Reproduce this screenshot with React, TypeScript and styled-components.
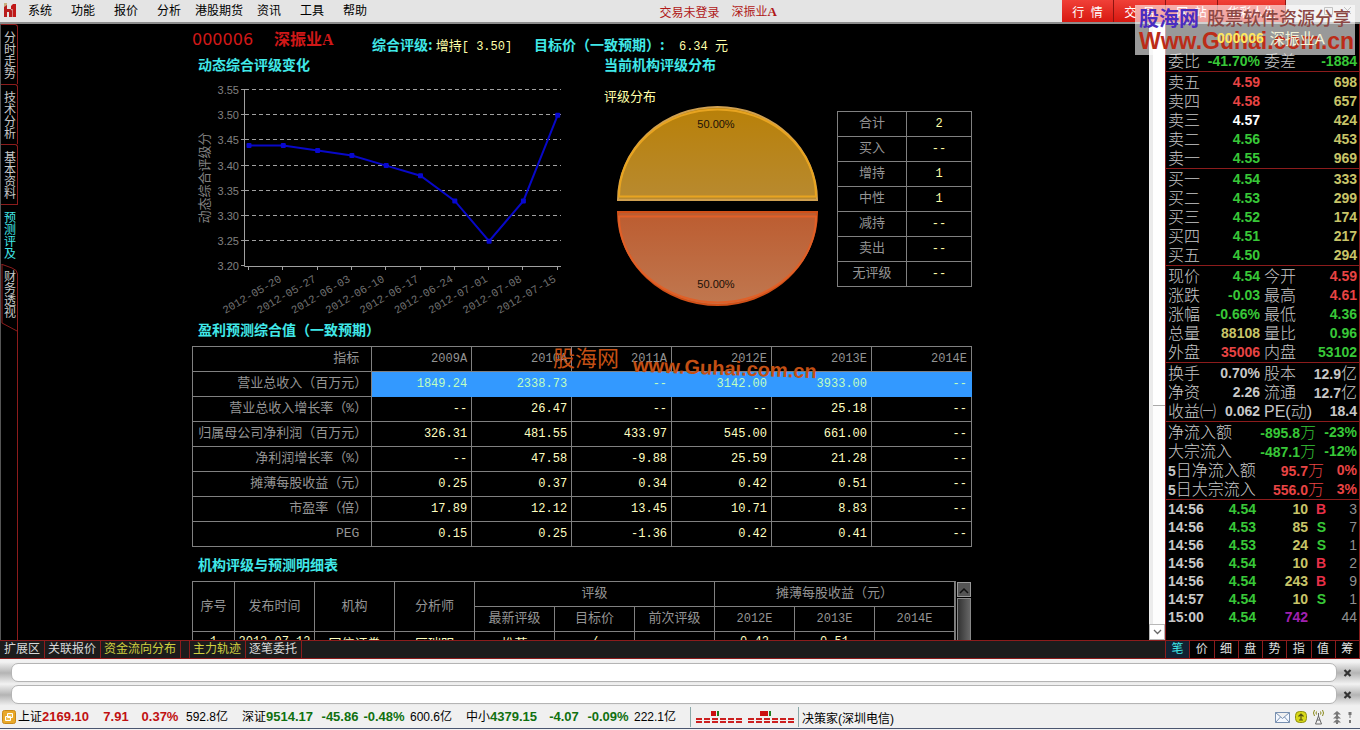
import React from "react";
import styled, { createGlobalStyle, css } from "styled-components";

const RED_LINE = "#8c1c1c";
const GREEN = "#38c838";
const RED = "#e84444";
const YELLOW = "#c8c468";
const SILVER = "#c8c8c8";
const CYAN = "#40e8e8";

const Global = createGlobalStyle`
  *, *::before, *::after { box-sizing: border-box; }
  html, body, #root { height: 100%; }
  body { margin: 0; background: #000; font-family: "Liberation Sans", "Noto Sans CJK SC", sans-serif; font-size: 12px; }
  button, input { font: inherit; color: inherit; margin: 0; padding: 0; border: 0; background: none; }
  h1, h2, p, ul { margin: 0; padding: 0; font-weight: normal; }
`;

const Page = styled.div`
  position: relative;
  display: flex;
  flex-direction: column;
  height: 100vh;
  overflow: hidden;
`;

/* ---------- menu bar ---------- */
const MenuBar = styled.header`
  display: flex;
  flex: none;
  height: 24px;
  background: #e4e4e4;
  border-bottom: 2px solid #8c8c8c;
  color: #000;
`;
const MenuSide = styled.nav`
  display: flex;
  flex: 1;
  align-items: center;
  gap: 19px;
  padding-left: 3px;
  > svg { margin-right: -7px; }
`;
const MenuItem = styled.button<{ $tight?: boolean }>`
  line-height: 22px;
  white-space: nowrap;
  margin-right: ${(p) => (p.$tight ? "-5px" : "0")};
`;
const LoginState = styled.div`
  display: flex;
  flex: 1;
  align-items: center;
  justify-content: flex-end;
  gap: 12px;
  padding-right: 285px;
  color: #b01818;
  white-space: nowrap;
  b { font-family: "Liberation Serif", serif; font-size: 13px; }
`;
const MenuActions = styled.div`
  display: flex;
  flex: none;
  width: 298px;
`;
const RedButton = styled.button<{ $wide?: boolean }>`
  width: ${(p) => (p.$wide ? 68 : 52)}px;
  height: 22px;
  border-right: 1px solid #8c1410;
  background: linear-gradient(#f04038, #d81810);
  color: #fff;
  white-space: pre;
`;
const WindowButtons = styled.div`
  display: flex;
  flex: 1;
  align-items: center;
  justify-content: flex-end;
  gap: 10px;
  padding-right: 8px;
`;

/* ---------- frame ---------- */
const Body = styled.div`
  display: flex;
  flex: 1;
  min-height: 0;
`;
const Left = styled.div`
  display: flex;
  flex: 1;
  flex-direction: column;
  min-width: 0;
`;
const Work = styled.main`
  display: flex;
  flex: 1;
  min-height: 0;
`;
const SideTabs = styled.nav`
  display: flex;
  flex: none;
  flex-direction: column;
  width: 18px;
  border-left: 1px solid #555;
`;
const SideTab = styled.button<{ $state?: "active" | "last" }>`
  position: relative;
  height: 60px;
  padding: 2px 2px 0 3px;
  line-height: 12px;
  text-align: center;
  color: ${(p) => (p.$state === "active" ? CYAN : SILVER)};
  ${(p) => !p.$state && css`border: 1px solid ${RED_LINE}; border-width: 1px 1px 0 0; border-top-right-radius: 3px;`}
  ${(p) => p.$state === "active" && css`border-top: 1px solid ${RED_LINE};`}
  span { display: block; width: 12px; }
  svg { position: absolute; left: 0; top: 0; }
`;
const SideRest = styled.div`
  flex: 1;
  margin-top: 6px;
  border-right: 1px solid ${RED_LINE};
`;
const Content = styled.section`
  flex: 1;
  min-width: 0;
  overflow: hidden;
  padding: 4px 3px 0 0;
`;
const Sheet = styled.div`
  width: 100%;
  max-width: 780px;
  margin: 0 auto;
`;
const PageScroll = styled.div`
  display: flex;
  flex: none;
  flex-direction: column;
  justify-content: space-between;
  width: 16px;
  background: #fdfdfd;
  border-left: 4px solid #ececec;
`;
const ScrollThumb = styled.div`
  height: 382px;
  border-bottom: 1px solid #aaa;
  background: #fff;
`;
const ScrollButton = styled.button`
  width: 16px;
  height: 16px;
  margin-left: -4px;
  border: 1px solid #b8b8b8;
  background: #fff;
  line-height: 0;
`;

/* ---------- report ---------- */
const ReportHead = styled.div`
  display: flex;
  height: 28px;
  line-height: 24px;
  white-space: pre;
`;
const Stock = styled.h1`
  width: 180px;
  font-size: 16px;
  color: #d01818;
  font-family: "DejaVu Sans", "Noto Sans CJK SC", sans-serif;
  b { font-family: "Liberation Serif", "Noto Sans CJK SC", serif; margin-left: 21px; }
`;
const Metric = styled.p<{ $wide?: boolean }>`
  width: ${(p) => (p.$wide ? 220 : 162)}px;
  padding-top: 4px;
  color: #ffffa8;
  font: 13px/24px "Noto Sans CJK SC", sans-serif;
  b { color: ${CYAN}; font-size: 14px; }
  span { font-family: "Liberation Mono", monospace; font-size: 12px; }
`;
const Heading = styled.h2`
  padding-left: 6px;
  height: 18px;
  font-size: 14px;
  line-height: 18px;
  font-weight: bold;
  color: ${CYAN};
  white-space: nowrap;
`;
const Charts = styled.div`
  display: grid;
  grid-template-columns: 406px 1fr;
  height: 265px;
  svg { display: block; }
`;
const LineBox = styled.div`
  padding-top: 6px;
`;
const Ratings = styled.div`
  display: flex;
  align-items: flex-start;
  justify-content: space-between;
`;
const PieTitle = styled.p`
  padding: 13px 0 0 6px;
  height: 31px;
  font-size: 13px;
  line-height: 20px;
  color: #ffffa8;
`;
const PieBox = styled.div`
  padding-left: 14px;
`;
const grid = css`
  border-collapse: collapse;
  table-layout: fixed;
  color: #949494;
  font: 12px/20px "Liberation Mono", "Noto Sans CJK SC", monospace;
  th, td { height: 25px; padding: 0 4px; border: 1px solid #808080; font-weight: normal; white-space: nowrap; overflow: hidden; }
`;
const RatingTable = styled.table`
  ${grid}
  width: 135px;
  margin: 37px 0 0;
  text-align: center;
  font-size: 13px;
  td { width: 65px; color: #ffffa8; font-size: 12px; }
`;
const ForecastTable = styled.table`
  ${grid}
  width: 100%;
  margin: 7px 0 9px;
  text-align: right;
  tbody th, thead th:first-child { font-size: 13px; }
  td { color: #ffffc0; }
`;
const ForecastRow = styled.tr<{ $on: boolean }>`
  ${(p) => p.$on && css`td { background: #3399ff; border-color: #3399ff; color: #c0ffc0; }`}
`;
const DetailWrap = styled.div`
  display: grid;
  grid-template-columns: 1fr 17px;
  margin-top: 7px;
`;
const DetailTable = styled.table`
  ${grid}
  width: 100%;
  text-align: center;
  th { font-size: 13px; }
  td { color: #ffffc0; font-size: 13px; }
  th.narrow, td.narrow { font-size: 12px; }
  td.narrow { line-height: 16px; padding: 0 2px 5px; }
  col:first-child { width: 42px; }
`;
const DetailScroll = styled.div`
  padding: 1px 1px 0 1px;
  border-left: 1px solid #777;
`;
const DetailUp = styled.button`
  display: block;
  width: 14px;
  height: 15px;
  border: 1px solid #999;
  background: #555;
  line-height: 0;
`;
const DetailThumb = styled.div`
  width: 14px;
  height: 60px;
  margin-top: 1px;
  border: 1px solid #888;
  background: linear-gradient(90deg, #333, #666);
`;

/* ---------- bottom tab bar ---------- */
const BottomTabs = styled.nav`
  display: flex;
  flex: none;
  height: 19px;
  padding-left: 1px;
  background: #1c1c1c;
  border: 1px solid ${RED_LINE};
  border-width: 1px 0;
`;
const BottomTab = styled.button<{ $hot?: boolean; $gap?: boolean }>`
  padding: 0 4px 0 3px;
  border-right: 1px solid ${RED_LINE};
  line-height: 17px;
  color: ${(p) => (p.$hot ? "#d0d040" : "#d8d8d8")};
  white-space: nowrap;
  ${(p) => p.$gap && css`margin-left: 8px; border-left: 1px solid ${RED_LINE};`}
`;

/* ---------- quote panel ---------- */
const Quote = styled.aside`
  display: flex;
  flex: none;
  flex-direction: column;
  width: 195px;
  background: #000;
  border: 1px solid ${RED_LINE};
  border-width: 0 1px 0 1px;
  color: ${SILVER};
  font-size: 14px;
`;
const QuoteTitle = styled.div`
  position: relative;
  z-index: 3;
  display: flex;
  flex: none;
  align-items: center;
  gap: 6px;
  height: 27px;
  padding-left: 51px;
  font-size: 15px;
  color: #f4f4d8;
  b { color: #ffe860; font-size: 14px; }
`;
const QuoteGroup = styled.div`
  flex: none;
  padding: 1px 2px 0;
  border-bottom: 1px solid ${RED_LINE};
`;
const QuoteRow = styled.div`
  display: flex;
  gap: 4px;
  height: 19px;
`;
const Half = styled.div<{ $w?: number }>`
  display: flex;
  justify-content: space-between;
  ${(p) => (p.$w ? css`width: ${p.$w}px;` : css`flex: 1;`)}
`;
const Name = styled.span`
  font-size: 16px;
  line-height: 19px;
  font-weight: 300;
  white-space: nowrap;
  b { font-size: 14px; font-weight: 700; }
`;
const Num = styled.b<{ $c?: string }>`
  color: ${(p) => p.$c || SILVER};
  line-height: 19px;
  white-space: nowrap;
  i { font-style: normal; font-weight: 300; font-size: 16px; }
`;
const Ticks = styled.div`
  flex: 1;
  min-height: 0;
  overflow: hidden;
  padding: 0 2px;
`;
const Tick = styled.div`
  display: grid;
  grid-template-columns: 40px 48px 52px 18px 1fr;
  line-height: 18px;
  text-align: right;
  > :first-child { text-align: left; }
`;
const TickCell = styled.b<{ $c: string; $plain?: boolean }>`
  color: ${(p) => p.$c};
  font-weight: ${(p) => (p.$plain ? "normal" : "bold")};
`;
const QuoteTabs = styled.nav`
  display: flex;
  flex: none;
  height: 19px;
  border: 1px solid ${RED_LINE};
  border-width: 1px 0;
`;
const QuoteTab = styled.button<{ $on?: boolean }>`
  flex: 1;
  font-size: 12px;
  line-height: 17px;
  border-right: 1px solid ${RED_LINE};
  color: ${(p) => (p.$on ? CYAN : "#e0e0e0")};
  background: ${(p) => (p.$on ? "#112233" : "#000")};
  &:last-child { border-right: 0; }
`;

/* ---------- footer ---------- */
const Bars = styled.div`
  flex: none;
  background: #f2f2f2;
  padding-top: 3px;
`;
const Bar = styled.label`
  display: flex;
  height: 22px;
  padding: 1px 0 2px 11px;
  background: linear-gradient(#f2f2f2, #b4b4b4 50%, #f2f2f2);
  input { flex: 1; min-width: 0; border: 1px solid #b4b4b4; border-radius: 7px; background: #fff; padding: 0 8px; color: #000; }
  button { width: 23px; padding: 0 2px 0 0; line-height: 0; }
`;
const Status = styled.footer`
  display: flex;
  flex: none;
  align-items: center;
  height: 23px;
  padding-left: 2px;
  background: #f0f0f0;
  border-bottom: 1px solid #4a5670;
  color: #000;
`;
const Index = styled.div`
  display: grid;
  grid-template-columns: 78px 40px 48px 46px;
  width: 224px;
  text-align: center;
  white-space: nowrap;
  line-height: 22px;
  > :first-child { text-align: left; }
`;
const Figure = styled.b<{ $up?: boolean }>`
  font-size: 13px;
  color: ${(p) => (p.$up ? "#c01010" : "#107010")};
`;
const Network = styled.div`
  width: 109px;
  height: 20px;
  border: 1px solid #8aa8a8;
  border-width: 0 1px;
  padding-left: 3px;
  svg { display: block; }
`;
const Server = styled.span`
  flex: 1;
  padding-left: 3px;
`;
const Tray = styled.div`
  display: flex;
  align-items: center;
  padding-right: 7px;
  svg { display: block; }
`;
const Desktop = styled.div`
  flex: none;
  height: 1px;
  background: #f4f4f4;
`;

/* ---------- overlays ---------- */
const SiteMark = styled.div`
  position: absolute;
  z-index: 2;
  top: 5px;
  right: 5px;
  width: 220px;
  height: 50px;
  padding: 3px 4px;
  background: rgba(255, 255, 255, 0.6);
  white-space: nowrap;
  pointer-events: none;
`;
const MarkTop = styled.div`
  display: flex;
  gap: 8px;
  line-height: 22px;
  font-size: 18px;
  font-weight: 500;
  color: #8c4844;
  b { font-size: 20px; color: #4a2cc0; }
`;
const MarkUrl = styled.div`
  font-size: 23px;
  line-height: 22px;
  font-weight: bold;
  color: #bc2c18;
`;
const MarkHost = styled.div`
  position: relative;
`;
const CenterMark = styled.div`
  position: absolute;
  top: 1px;
  left: 361px;
  display: flex;
  gap: 14px;
  color: #c45014;
  font-size: 22px;
  line-height: 24px;
  white-space: nowrap;
  pointer-events: none;
  b { font-size: 20px; transform: rotate(2deg); margin-top: 9px; }
`;

const menu = ["系统", "功能", "报价", "分析", "港股期货", "资讯", "工具", "帮助"];
const sideTabs = ["分时走势", "技术分析", "基本资料", "预测评及", "财务透视"];

const values = [3.44, 3.44, 3.43, 3.42, 3.4, 3.38, 3.33, 3.25, 3.33, 3.5];
const dates = ["2012-05-20", "2012-05-27", "2012-06-03", "2012-06-10", "2012-06-17", "2012-06-24", "2012-07-01", "2012-07-08", "2012-07-15"];
const levels = ["3.55", "3.50", "3.45", "3.40", "3.35", "3.30", "3.25", "3.20"];

const ratings = [["合计", "2"], ["买入", "--"], ["增持", "1"], ["中性", "1"], ["减持", "--"], ["卖出", "--"], ["无评级", "--"]];

const forecast = [
  ["营业总收入（百万元）", "1849.24", "2338.73", "--", "3142.00", "3933.00", "--"],
  ["营业总收入增长率（%）", "--", "26.47", "--", "--", "25.18", "--"],
  ["归属母公司净利润（百万元）", "326.31", "481.55", "433.97", "545.00", "661.00", "--"],
  ["净利润增长率（%）", "--", "47.58", "-9.88", "25.59", "21.28", "--"],
  ["摊薄每股收益（元）", "0.25", "0.37", "0.34", "0.42", "0.51", "--"],
  ["市盈率（倍）", "17.89", "12.12", "13.45", "10.71", "8.83", "--"],
  ["PEG\u00a0", "0.15", "0.25", "-1.36", "0.42", "0.41", "--"],
];

const sells = [["卖五", "4.59", "698", RED], ["卖四", "4.58", "657", RED], ["卖三", "4.57", "424", "#fff"], ["卖二", "4.56", "453", GREEN], ["卖一", "4.55", "969", GREEN]];
const buys = [["买一", "4.54", "333", GREEN], ["买二", "4.53", "299", GREEN], ["买三", "4.52", "174", GREEN], ["买四", "4.51", "217", GREEN], ["买五", "4.50", "294", GREEN]];
const prices = [
  ["现价", "4.54", GREEN, "今开", "4.59", RED],
  ["涨跌", "-0.03", GREEN, "最高", "4.61", RED],
  ["涨幅", "-0.66%", GREEN, "最低", "4.36", GREEN],
  ["总量", "88108", YELLOW, "量比", "0.96", GREEN],
  ["外盘", "35006", RED, "内盘", "53102", GREEN],
];
const basics = [
  ["换手", "0.70%", SILVER, "股本", "12.9亿", SILVER],
  ["净资", "2.26", SILVER, "流通", "12.7亿", SILVER],
  ["收益㈠", "0.062", SILVER, "PE(动)", "18.4", SILVER],
];
const flows = [
  ["净流入额", "-895.8", "-23%", GREEN, 148],
  ["大宗流入", "-487.1", "-12%", GREEN, 148],
  ["5日净流入额", "95.7", "0%", RED, 156],
  ["5日大宗流入", "556.0", "3%", RED, 156],
] as const;
const ticks = [
  ["14:56", "4.54", "10", "B", "3"],
  ["14:56", "4.53", "85", "S", "7"],
  ["14:56", "4.53", "24", "S", "1"],
  ["14:56", "4.54", "10", "B", "2"],
  ["14:56", "4.54", "243", "B", "9"],
  ["14:57", "4.54", "10", "S", "1"],
  ["15:00", "4.54", "742", "", "44"],
];
const indices = [
  ["上证", "2169.10", "7.91", "0.37%", "592.8亿"],
  ["深证", "9514.17", "-45.86", "-0.48%", "600.6亿"],
  ["中小", "4379.15", "-4.07", "-0.09%", "222.1亿"],
];

function Logo() {
  return (
    <svg width="13" height="16" viewBox="0 0 13 16" aria-hidden="true">
      <path d="M1 0h3v3H2v2H1z" fill="#c8b080" />
      <path d="M1 4l3-2v4h3q2 0 2 2v6H6V9H4v5H1z" fill="#b81c1c" />
      <path d="M8 3l2-2h3v13H9.500V6H8z" fill="#c01818" />
    </svg>
  );
}

function LineChart() {
  const x = (i: number) => 57 + i * 34.3;
  const y = (v: number) => 10 + (3.55 - v) * 504;
  return (
    <svg width="380" height="240" viewBox="0 0 380 240" aria-label="动态综合评级分">
      {levels.map((l, i) => (
        <g key={l}>
          <text x="47" y={14 + i * 25.2} textAnchor="end" fill="#808080" fontFamily="Liberation Sans" fontSize="11">{l}</text>
          <path d={`M49 ${Math.round(i * 25.2) + 9.5}h4`} stroke="#999" />
          {i < 7 && <path d={`M53 ${Math.round(i * 25.2) + 9.5}H369`} stroke="#a0a0a0" strokeDasharray="4 3" />}
        </g>
      ))}
      <path d="M52.5 9V186.500H369" fill="none" stroke="#a0a0a0" />
      {values.map((_, i) => <path key={i} d={`M${Math.round(x(i)) - 0.5} 187v3`} stroke="#a0a0a0" />)}
      <polyline points={values.map((v, i) => `${x(i)},${y(v)}`).join(" ")} fill="none" stroke="#0808c8" strokeWidth="2" />
      {values.map((v, i) => <rect key={i} x={x(i) - 2.5} y={y(v) - 2.5} width="5" height="5" rx="1" fill="#0808d0" />)}
      {dates.map((d, i) => (
        <text key={d} transform={`translate(${x(i + 1) - 1} 201) rotate(-30)`} textAnchor="end" fill="#707070" fontFamily="Liberation Mono" fontSize="11">{d}</text>
      ))}
      <text transform="translate(17 98) rotate(-90)" textAnchor="middle" fill="#808080" fontFamily="Noto Sans CJK SC" fontSize="13">动态综合评级分</text>
    </svg>
  );
}

function Pie() {
  return (
    <svg width="212" height="204" viewBox="0 0 212 204" aria-label="评级分布">
      <defs>
        <linearGradient id="gold" x1="0" y1="0" x2="0" y2="1"><stop offset="0" stopColor="#b88008" /><stop offset="1" stopColor="#b88a30" /></linearGradient>
        <linearGradient id="rust" x1="0" y1="0" x2="0" y2="1"><stop offset="0" stopColor="#bc5c30" /><stop offset="1" stopColor="#c07850" /></linearGradient>
      </defs>
      <path d="M6 95A99.500 93 0 0 1 205 95Z" fill="url(#gold)" stroke="#d0a050" strokeWidth="2" />
      <path d="M7 91.500A98.500 87 0 0 1 204 91.500Z" fill="none" stroke="#e8a420" strokeWidth="2" />
      <path d="M6 107A99.500 93 0 0 0 205 107Z" fill="url(#rust)" stroke="#d05018" strokeWidth="2" />
      <path d="M7 111.500A98.500 86 0 0 0 204 111.500Z" fill="none" stroke="#e06028" strokeWidth="2" />
      <g fill="#181008" fontFamily="Liberation Sans" fontSize="11" textAnchor="middle">
        <text x="104" y="23">50.00%</text>
        <text x="104" y="183">50.00%</text>
      </g>
    </svg>
  );
}

function Pair({ row }: { row: string[] }) {
  const value = (t: string) => (t.endsWith("亿") ? <>{t.slice(0, -1)}<i>亿</i></> : t);
  return (
    <QuoteRow>
      <Half $w={92}><Name>{row[0]}</Name><Num $c={row[2]}>{row[1]}</Num></Half>
      <Half><Name>{row[3]}</Name><Num $c={row[5]}>{value(row[4])}</Num></Half>
    </QuoteRow>
  );
}

function Level({ row }: { row: string[] }) {
  return (
    <QuoteRow>
      <Half $w={92}><Name>{row[0]}</Name><Num $c={row[3]}>{row[1]}</Num></Half>
      <Half><span /><Num $c={YELLOW}>{row[2]}</Num></Half>
    </QuoteRow>
  );
}

function CommandBar({ name }: { name: string }) {
  return (
    <Bar>
      <input type="text" aria-label={name} />
      <button type="button" aria-label="关闭">
        <svg width="9" height="8" viewBox="0 0 9 8"><path d="M1.500 1l6 6M7.500 1l-6 6" stroke="#333" strokeWidth="2.200" /></svg>
      </button>
    </Bar>
  );
}

function NetworkGraph() {
  const cells = [0, 1, 2, 3, 4, 5];
  return (
    <svg width="104" height="20" viewBox="0 0 104 20" aria-hidden="true">
      {[2, 54].map((o) => cells.map((c) => (
        <g key={`${o}-${c}`} fill="#cc2020">
          <rect x={o + c * 8} y="11" width="6" height="2" />
          <rect x={o + c * 8} y="14" width="6" height="2" />
        </g>
      )))}
      <path d="M17 4h5v5h-5zM66 4h8v5h-8z" fill="#cc1010" />
      <path d="M23 4h2v5h-2zM75 4h2v5h-2z" fill="#208020" />
    </svg>
  );
}

export default function App() {
  return (
    <Page>
      <Global />
      <MenuBar>
        <MenuSide>
          <Logo />
          {menu.map((m, i) => <MenuItem key={m} $tight={i === 3 || i === 4}>{m}</MenuItem>)}
        </MenuSide>
        <LoginState><span>交易未登录</span><span>深振业<b>A</b></span></LoginState>
        <MenuActions>
          <RedButton>行  情</RedButton>
          <RedButton>交  易</RedButton>
          <RedButton>网  站</RedButton>
          <RedButton $wide>华彩人生</RedButton>
          <WindowButtons>
            <button aria-label="最大化"><svg width="9" height="9"><path d="M.5 1.500h8v7h-8z" fill="none" stroke="#666" /></svg></button>
            <button aria-label="关闭窗口"><svg width="9" height="9"><path d="M1 1l7 7M8 1l-7 7" stroke="#666" /></svg></button>
          </WindowButtons>
        </MenuActions>
      </MenuBar>

      <Body>
        <Left>
          <Work>
            <SideTabs>
              {sideTabs.map((t, i) => (
                <SideTab key={t} $state={i === 3 ? "active" : i === 4 ? "last" : undefined}>
                  {i === 4 && <svg width="17" height="68" viewBox="0 0 17 68"><path d="M0 0l11 4q5.500 2 5.500 6V67M16 67L1 59V1" fill="none" stroke={RED_LINE} /></svg>}
                  <span>{t}</span>
                </SideTab>
              ))}
              <SideRest />
            </SideTabs>

            <Content>
              <Sheet>
                <ReportHead>
                  <Stock>000006<b>深振业A</b></Stock>
                  <Metric><b>综合评级: </b>增持<span>[ 3.50]</span></Metric>
                  <Metric $wide><b>目标价（一致预期）:</b><span>  6.34 </span>元</Metric>
                </ReportHead>

                <Charts>
                  <div>
                    <Heading>动态综合评级变化</Heading>
                    <LineBox><LineChart /></LineBox>
                  </div>
                  <div>
                    <Heading>当前机构评级分布</Heading>
                    <Ratings>
                      <div>
                        <PieTitle>评级分布</PieTitle>
                        <PieBox><Pie /></PieBox>
                      </div>
                      <RatingTable>
                        <tbody>
                          {ratings.map(([k, v]) => <tr key={k}><th scope="row">{k}</th><td>{v}</td></tr>)}
                        </tbody>
                      </RatingTable>
                    </Ratings>
                  </div>
                </Charts>

                <Heading>盈利预测综合值（一致预期）</Heading>
                <MarkHost>
                  <ForecastTable>
                    <colgroup><col style={{ width: "23%" }} /></colgroup>
                    <thead>
                      <tr>
                        <th>指标&nbsp;</th>
                        {["2009A", "2010A", "2011A", "2012E", "2013E", "2014E"].map((y) => <th key={y}>{y}</th>)}
                      </tr>
                    </thead>
                    <tbody>
                      {forecast.map((r, i) => (
                        <ForecastRow key={r[0]} $on={i === 0}>
                          <th scope="row">{r[0]}</th>
                          {r.slice(1).map((v, j) => <td key={j}>{v}</td>)}
                        </ForecastRow>
                      ))}
                    </tbody>
                  </ForecastTable>
                  <CenterMark>股海网<b>www.Guhai.com.cn</b></CenterMark>
                </MarkHost>

                <Heading>机构评级与预测明细表</Heading>
                <DetailWrap>
                  <DetailTable>
                    <colgroup>
                      <col /><col span={9} />
                    </colgroup>
                    <thead>
                      <tr>
                        <th rowSpan={2}>序号</th><th rowSpan={2}>发布时间</th><th rowSpan={2}>机构</th><th rowSpan={2}>分析师</th>
                        <th colSpan={3}>评级</th><th colSpan={3}>摊薄每股收益（元）</th>
                      </tr>
                      <tr>
                        <th>最新评级</th><th>目标价</th><th>前次评级</th>
                        <th className="narrow">2012E</th><th className="narrow">2013E</th><th className="narrow">2014E</th>
                      </tr>
                    </thead>
                    <tbody>
                      <tr>
                        <td className="narrow">1</td><td className="narrow">2012-07-12</td><td>国信证券</td><td>区瑞明</td><td>推荐</td>
                        <td className="narrow">/</td><td></td><td className="narrow">0.42</td><td className="narrow">0.51</td><td></td>
                      </tr>
                    </tbody>
                  </DetailTable>
                  <DetailScroll>
                    <DetailUp aria-label="向上滚动"><svg width="10" height="8" viewBox="0 0 10 8"><path d="M1 7l4-4 4 4" fill="none" stroke="#111" strokeWidth="1.500" /></svg></DetailUp>
                    <DetailThumb />
                  </DetailScroll>
                </DetailWrap>
              </Sheet>
            </Content>

            <PageScroll>
              <ScrollThumb />
              <ScrollButton aria-label="向下滚动"><svg width="9" height="6" viewBox="0 0 9 6"><path d="M1 1l3.500 3.500L8 1" fill="none" stroke="#666" strokeWidth="1.300" /></svg></ScrollButton>
            </PageScroll>
          </Work>
          <BottomTabs>
            <BottomTab>扩展区</BottomTab>
            <BottomTab>关联报价</BottomTab>
            <BottomTab $hot>资金流向分布</BottomTab>
            <BottomTab $hot $gap>主力轨迹</BottomTab>
            <BottomTab>逐笔委托</BottomTab>
          </BottomTabs>
        </Left>

        <Quote>
          <QuoteTitle><b>000006</b>深振业A</QuoteTitle>
          <QuoteGroup>
            <Pair row={["委比", "-41.70%", GREEN, "委差", "-1884", GREEN]} />
          </QuoteGroup>
          <QuoteGroup>{sells.map((r) => <Level key={r[0]} row={r} />)}</QuoteGroup>
          <QuoteGroup>{buys.map((r) => <Level key={r[0]} row={r} />)}</QuoteGroup>
          <QuoteGroup>{prices.map((r) => <Pair key={r[0]} row={r} />)}</QuoteGroup>
          <QuoteGroup>{basics.map((r) => <Pair key={r[0]} row={r} />)}</QuoteGroup>
          <QuoteGroup>
            {flows.map((r) => (
              <QuoteRow key={r[0]}>
                <Half $w={r[4]}><Name>{r[0].startsWith("5") ? <><b>5</b>{r[0].slice(1)}</> : r[0]}</Name><Num $c={r[3]}>{r[1]}<i>万</i></Num></Half>
                <Half><span /><Num $c={r[3]}>{r[2]}</Num></Half>
              </QuoteRow>
            ))}
          </QuoteGroup>
          <Ticks>
            {ticks.map((t, i) => (
              <Tick key={i}>
                <TickCell $c={SILVER}>{t[0]}</TickCell>
                <TickCell $c={GREEN}>{t[1]}</TickCell>
                <TickCell $c={t[3] ? YELLOW : "#a020b0"}>{t[2]}</TickCell>
                <TickCell $c={t[3] === "B" ? "#e83048" : GREEN}>{t[3]}</TickCell>
                <TickCell $c="#909090" $plain>{t[4]}</TickCell>
              </Tick>
            ))}
          </Ticks>
          <QuoteTabs>
            {["笔", "价", "细", "盘", "势", "指", "值", "筹"].map((t, i) => <QuoteTab key={t} $on={i === 0}>{t}</QuoteTab>)}
          </QuoteTabs>
        </Quote>
      </Body>

      <Bars>
        <CommandBar name="信息栏一" />
        <CommandBar name="信息栏二" />
      </Bars>
      <Status>
        <svg width="16" height="14" viewBox="0 0 16 14" aria-hidden="true">
          <rect x=".5" y=".5" width="13" height="13" rx="2" fill="#e8a828" stroke="#c88818" />
          <path d="M5.500 3.500h5v4h-5zM3.500 6.500h5v4h-5z" fill="#f0c050" stroke="#fff" />
        </svg>
        {indices.map((r) => {
          const up = !r[2].startsWith("-");
          return (
            <Index key={r[0]}>
              <span>{r[0]}<Figure $up={up}>{r[1]}</Figure></span>
              <Figure $up={up}>{r[2]}</Figure>
              <Figure $up={up}>{r[3]}</Figure>
              <span>{r[4]}</span>
            </Index>
          );
        })}
        <Network><NetworkGraph /></Network>
        <Server>决策家(深圳电信)</Server>
        <Tray>
          <svg width="78" height="18" viewBox="0 0 78 18" aria-hidden="true">
            <path d="M.5 4.500h14v10H.5zM.5 4.500l7 6 7-6M.5 14.500l5-5.500M14.500 14.500l-5-5.500" fill="#f4f8ff" stroke="#7890b0" />
            <rect x="20.500" y="3.500" width="11" height="11" rx="4" fill="#d8d818" stroke="#909010" />
            <path d="M26 12V7M23.500 8.500L26 6l2.500 2.500M24 12h4" fill="none" stroke="#555510" strokeWidth="1.200" />
            <path d="M39.500 2q-2 3 0 6M47.500 2q2 3 0 6M41.500 3.500q-1 1.500 0 3M45.500 3.500q1 1.500 0 3" fill="none" stroke="#888818" />
            <path d="M43.500 5v3M43.500 8l-3 8h6zM42 12h3" fill="none" stroke="#666" />
            <path d="M62 3l4 3.500h-8zM61 6h2v2h-2zM62 7l4 3.500h-8zM61 10h2v1h-2zM62 11l4 3.500h-8zM61 14h2v2h-2z" fill="#777" />
            <path d="M73.500 4h3v3h-1v3h-1V7h-1zM74 12h2v3h-2z" fill="#777" />
          </svg>
        </Tray>
      </Status>
      <Desktop />

      <SiteMark>
        <MarkTop><b>股海网</b>股票软件资源分享</MarkTop>
        <MarkUrl>Www.Guhai.com.cn</MarkUrl>
      </SiteMark>
    </Page>
  );
}
